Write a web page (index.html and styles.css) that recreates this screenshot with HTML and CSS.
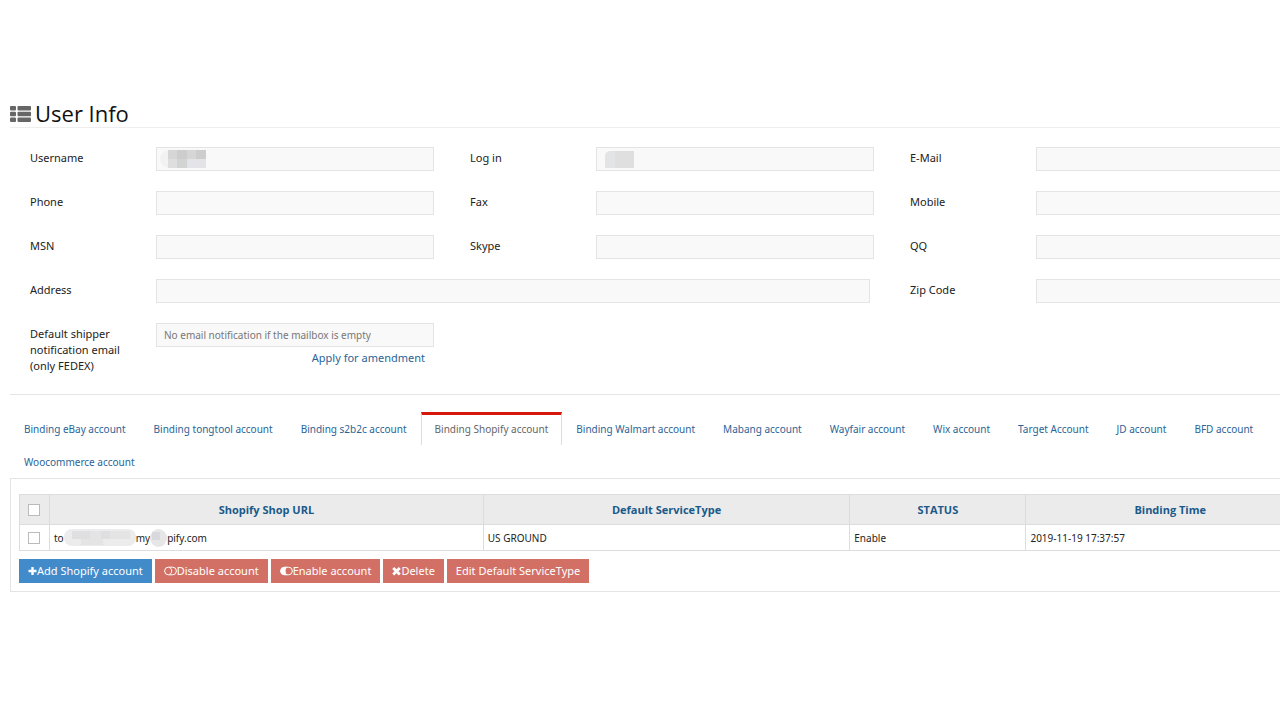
FILE: index.html
```html
<!DOCTYPE html>
<html lang="en">
<head>
<meta charset="utf-8">
<title>User Info</title>
<link rel="stylesheet" href="styles.css">
</head>
<body>
<main class="page">
  <h1 class="title">
    <svg class="title-icon" viewBox="0 0 21 16" aria-hidden="true"><g fill="#666"><rect width="6" height="4.4" rx="1"/><rect x="7.5" width="13.5" height="4.4" rx="1"/><rect y="5.8" width="6" height="4.4" rx="1"/><rect x="7.5" y="5.8" width="13.5" height="4.4" rx="1"/><rect y="11.6" width="6" height="4.4" rx="1"/><rect x="7.5" y="11.6" width="13.5" height="4.4" rx="1"/></g></svg>
    User Info
  </h1>

  <form class="info">
    <div class="field">
      <label for="username">Username</label>
      <div class="control">
        <input id="username" type="text" readonly>
        <svg class="mask" width="50" height="20" viewBox="0 0 50 20" aria-hidden="true"><circle cx="10" cy="10" r="9" fill="#f2f2f2"/><path fill="#d6d6d6" d="M9 1h38v9H9z"/><path fill="#cdcdcd" d="M18 1h10v9H18zM37 1h10v9H37z"/><path fill="#dedede" d="M9 10h9v9H9z"/><path fill="#d2d4d4" d="M18 10h10v9H18z"/><path fill="#e4e4e8" d="M28 10h19v9H28z"/></svg>
      </div>
    </div>
    <div class="field">
      <label for="login">Log in</label>
      <div class="control">
        <input id="login" type="text" readonly>
        <svg class="mask" width="50" height="20" viewBox="0 0 50 20" aria-hidden="true"><path fill="#e3e4e5" d="M10 2h8v17H7q-1 0-1-2V7q0-4 4-5z"/><path fill="#dfdfdf" d="M16 2h19v17H16z"/></svg>
      </div>
    </div>
    <div class="field"><label for="email">E-Mail</label><div class="control"><input id="email" type="text" readonly></div></div>
    <div class="field"><label for="phone">Phone</label><div class="control"><input id="phone" type="text" readonly></div></div>
    <div class="field"><label for="fax">Fax</label><div class="control"><input id="fax" type="text" readonly></div></div>
    <div class="field"><label for="mobile">Mobile</label><div class="control"><input id="mobile" type="text" readonly></div></div>
    <div class="field"><label for="msn">MSN</label><div class="control"><input id="msn" type="text" readonly></div></div>
    <div class="field"><label for="skype">Skype</label><div class="control"><input id="skype" type="text" readonly></div></div>
    <div class="field"><label for="qq">QQ</label><div class="control"><input id="qq" type="text" readonly></div></div>
    <div class="field field-wide"><label for="address">Address</label><div class="control"><input id="address" type="text" readonly></div></div>
    <div class="field"><label for="zip">Zip Code</label><div class="control"><input id="zip" type="text" readonly></div></div>
    <div class="field">
      <label for="notify">Default shipper notification email (only FEDEX)</label>
      <div class="control">
        <input id="notify" type="text" placeholder="No email notification if the mailbox is empty" readonly>
        <a class="amend" href="#">Apply for amendment</a>
      </div>
    </div>
  </form>

  <nav class="tabs">
    <a href="#">Binding eBay account</a>
    <a href="#">Binding tongtool account</a>
    <a href="#">Binding s2b2c account</a>
    <a href="#" class="active" aria-current="page">Binding Shopify account</a>
    <a href="#">Binding Walmart account</a>
    <a href="#">Mabang account</a>
    <a href="#">Wayfair account</a>
    <a href="#">Wix account</a>
    <a href="#">Target Account</a>
    <a href="#">JD account</a>
    <a href="#">BFD account</a>
    <a href="#">Woocommerce account</a>
  </nav>

  <section class="panel">
    <table class="accounts">
      <colgroup><col class="col-check"><col class="col-url"><col class="col-service"><col class="col-status"><col class="col-time"></colgroup>
      <thead>
        <tr>
          <th><input type="checkbox" aria-label="Select all accounts"></th>
          <th>Shopify Shop URL</th>
          <th>Default ServiceType</th>
          <th>STATUS</th>
          <th>Binding Time</th>
        </tr>
      </thead>
      <tbody>
        <tr>
          <td><input type="checkbox" aria-label="Select account"></td>
          <td><div class="shop"><span>to</span><svg width="72" height="20" viewBox="0 0 72 20" aria-hidden="true"><rect y="1" width="72" height="17" rx="8" fill="#ececec"/><path fill="#dfdfe1" d="M8 3h18v8H8zM37 3h9v8h-9z"/><path fill="#e4e4e4" d="M26 3h11v8H26zM46 3h20v8H46zM17 11h22v6H17z"/></svg><span>my</span><svg width="17" height="18" viewBox="0 0 17 18" aria-hidden="true"><ellipse cx="8.500" cy="9" rx="8.500" ry="9" fill="#e6e6e7"/><path fill="#d9d8df" d="M2 3h8v8H2z"/></svg><span>pify.com</span></div></td>
          <td>US GROUND</td>
          <td>Enable</td>
          <td>2019-11-19 17:37:57</td>
        </tr>
      </tbody>
    </table>
    <div class="actions">
      <button type="button" class="primary"><svg width="9" height="10" viewBox="0 0 9 10" aria-hidden="true"><path d="M4.5 1v8M.5 5h8" stroke="#fff" stroke-width="2.4"/></svg>Add Shopify account</button>
      <button type="button"><svg width="13" height="10" viewBox="0 0 13 10" aria-hidden="true"><rect x=".6" y="1.2" width="11.8" height="7.6" rx="3.8" fill="none" stroke="#fff"/><path d="M5 1.4c3.6 1 3.6 6.2 0 7.2" fill="none" stroke="#fff"/></svg>Disable account</button>
      <button type="button"><svg width="13" height="10" viewBox="0 0 13 10" aria-hidden="true"><rect x=".6" y="1.2" width="11.8" height="7.6" rx="3.8" fill="none" stroke="#fff"/><path d="M4.4 1h3C5 2.500 5 7.500 7.400 9h-3C-.8 8.500-.8 1.500 4.400 1z" fill="#fff"/></svg>Enable account</button>
      <button type="button"><svg width="9" height="10" viewBox="0 0 9 10" aria-hidden="true"><path d="M1.200 2l6.600 6.600M7.800 2L1.200 8.600" stroke="#fff" stroke-width="2.800"/></svg>Delete</button>
      <button type="button">Edit Default ServiceType</button>
    </div>
  </section>
</main>
</body>
</html>
```
FILE: styles.css
```css
* { box-sizing: border-box; }
body {
  margin: 0;
  background: #fff;
  color: #222;
  font: 11px/16px "Noto Sans", "Open Sans", sans-serif;
  overflow-x: hidden;
}
a { color: #2a6496; text-decoration: none; }
.page { padding: 100px 0 40px 10px; overflow-x: clip; }
.title {
  display: flex;
  align-items: center;
  gap: 4px;
  margin: 0;
  border-bottom: 1px solid #eee;
  color: #111;
  font: 400 22px/27px "Open Sans", sans-serif;
}
.title-icon { width: 21px; height: 16px; }
.info {
  display: grid;
  grid-template-columns: repeat(3, 1fr);
  column-gap: 36px;
  row-gap: 20px;
  margin-right: -34px;
  padding: 19px 0 19px 20px;
}
.field { display: flex; }
.field-wide { grid-column: span 2; padding-right: 4px; }
.field label { flex: none; width: 126px; padding-top: 3px; padding-right: 24px; }
.field:last-child { padding-bottom: 1px; }
.control { position: relative; flex: 1; height: 24px; }
.control input {
  display: block;
  width: 100%;
  height: 24px;
  border: 1px solid #e4e4e4;
  border-radius: 0;
  background: #f9f9f9;
  padding: 0 7px;
  font: inherit;
  font-size: 10px;
  outline: 0;
}
.control input::placeholder { color: #777; opacity: 1; }
.mask { position: absolute; left: 3px; top: 2px; }
.amend { display: block; margin-top: 3px; padding-right: 9px; text-align: right; }
.tabs {
  display: flex;
  flex-wrap: wrap;
  border-top: 1px solid #e4e4e4;
  padding-top: 17px;
  font-size: 10px;
}
.tabs a {
  height: 33px;
  border: 1px solid transparent;
  border-width: 3px 1px 0;
  padding: 6px 13px 0;
}
.tabs .active { border-color: #d5180b #ddd transparent; color: #666; }
.panel {
  margin-right: -44px;
  border: 1px solid #e4e4e4;
  padding: 15px 8px 8px;
}
.accounts {
  width: 100%;
  table-layout: fixed;
  border-collapse: collapse;
  font-size: 10px;
}
.col-check { width: 30px; }
.col-url { width: 33.5%; }
.col-service { width: 28.3%; }
.col-status { width: 13.6%; }
.accounts th, .accounts td { border: 1px solid #ddd; padding: 0 4px; }
.accounts th {
  height: 30px;
  background: #ebebeb;
  color: #1a5a8a;
  font: 700 11px/16px "Open Sans", sans-serif;
}
.accounts td { height: 26px; }
.accounts input {
  appearance: none;
  display: block;
  width: 12px;
  height: 12px;
  margin: 0 4px;
  border: 1px solid #bbb;
  background: #fff;
}
.shop { display: flex; align-items: center; }
.actions { display: flex; gap: 3px; padding-top: 8px; }
.actions button {
  display: flex;
  align-items: center;
  height: 24px;
  border: 0;
  background: #d27065;
  padding: 0 9px;
  color: #fff;
  font: inherit;
}
.actions .primary { background: #428bca; }
```
